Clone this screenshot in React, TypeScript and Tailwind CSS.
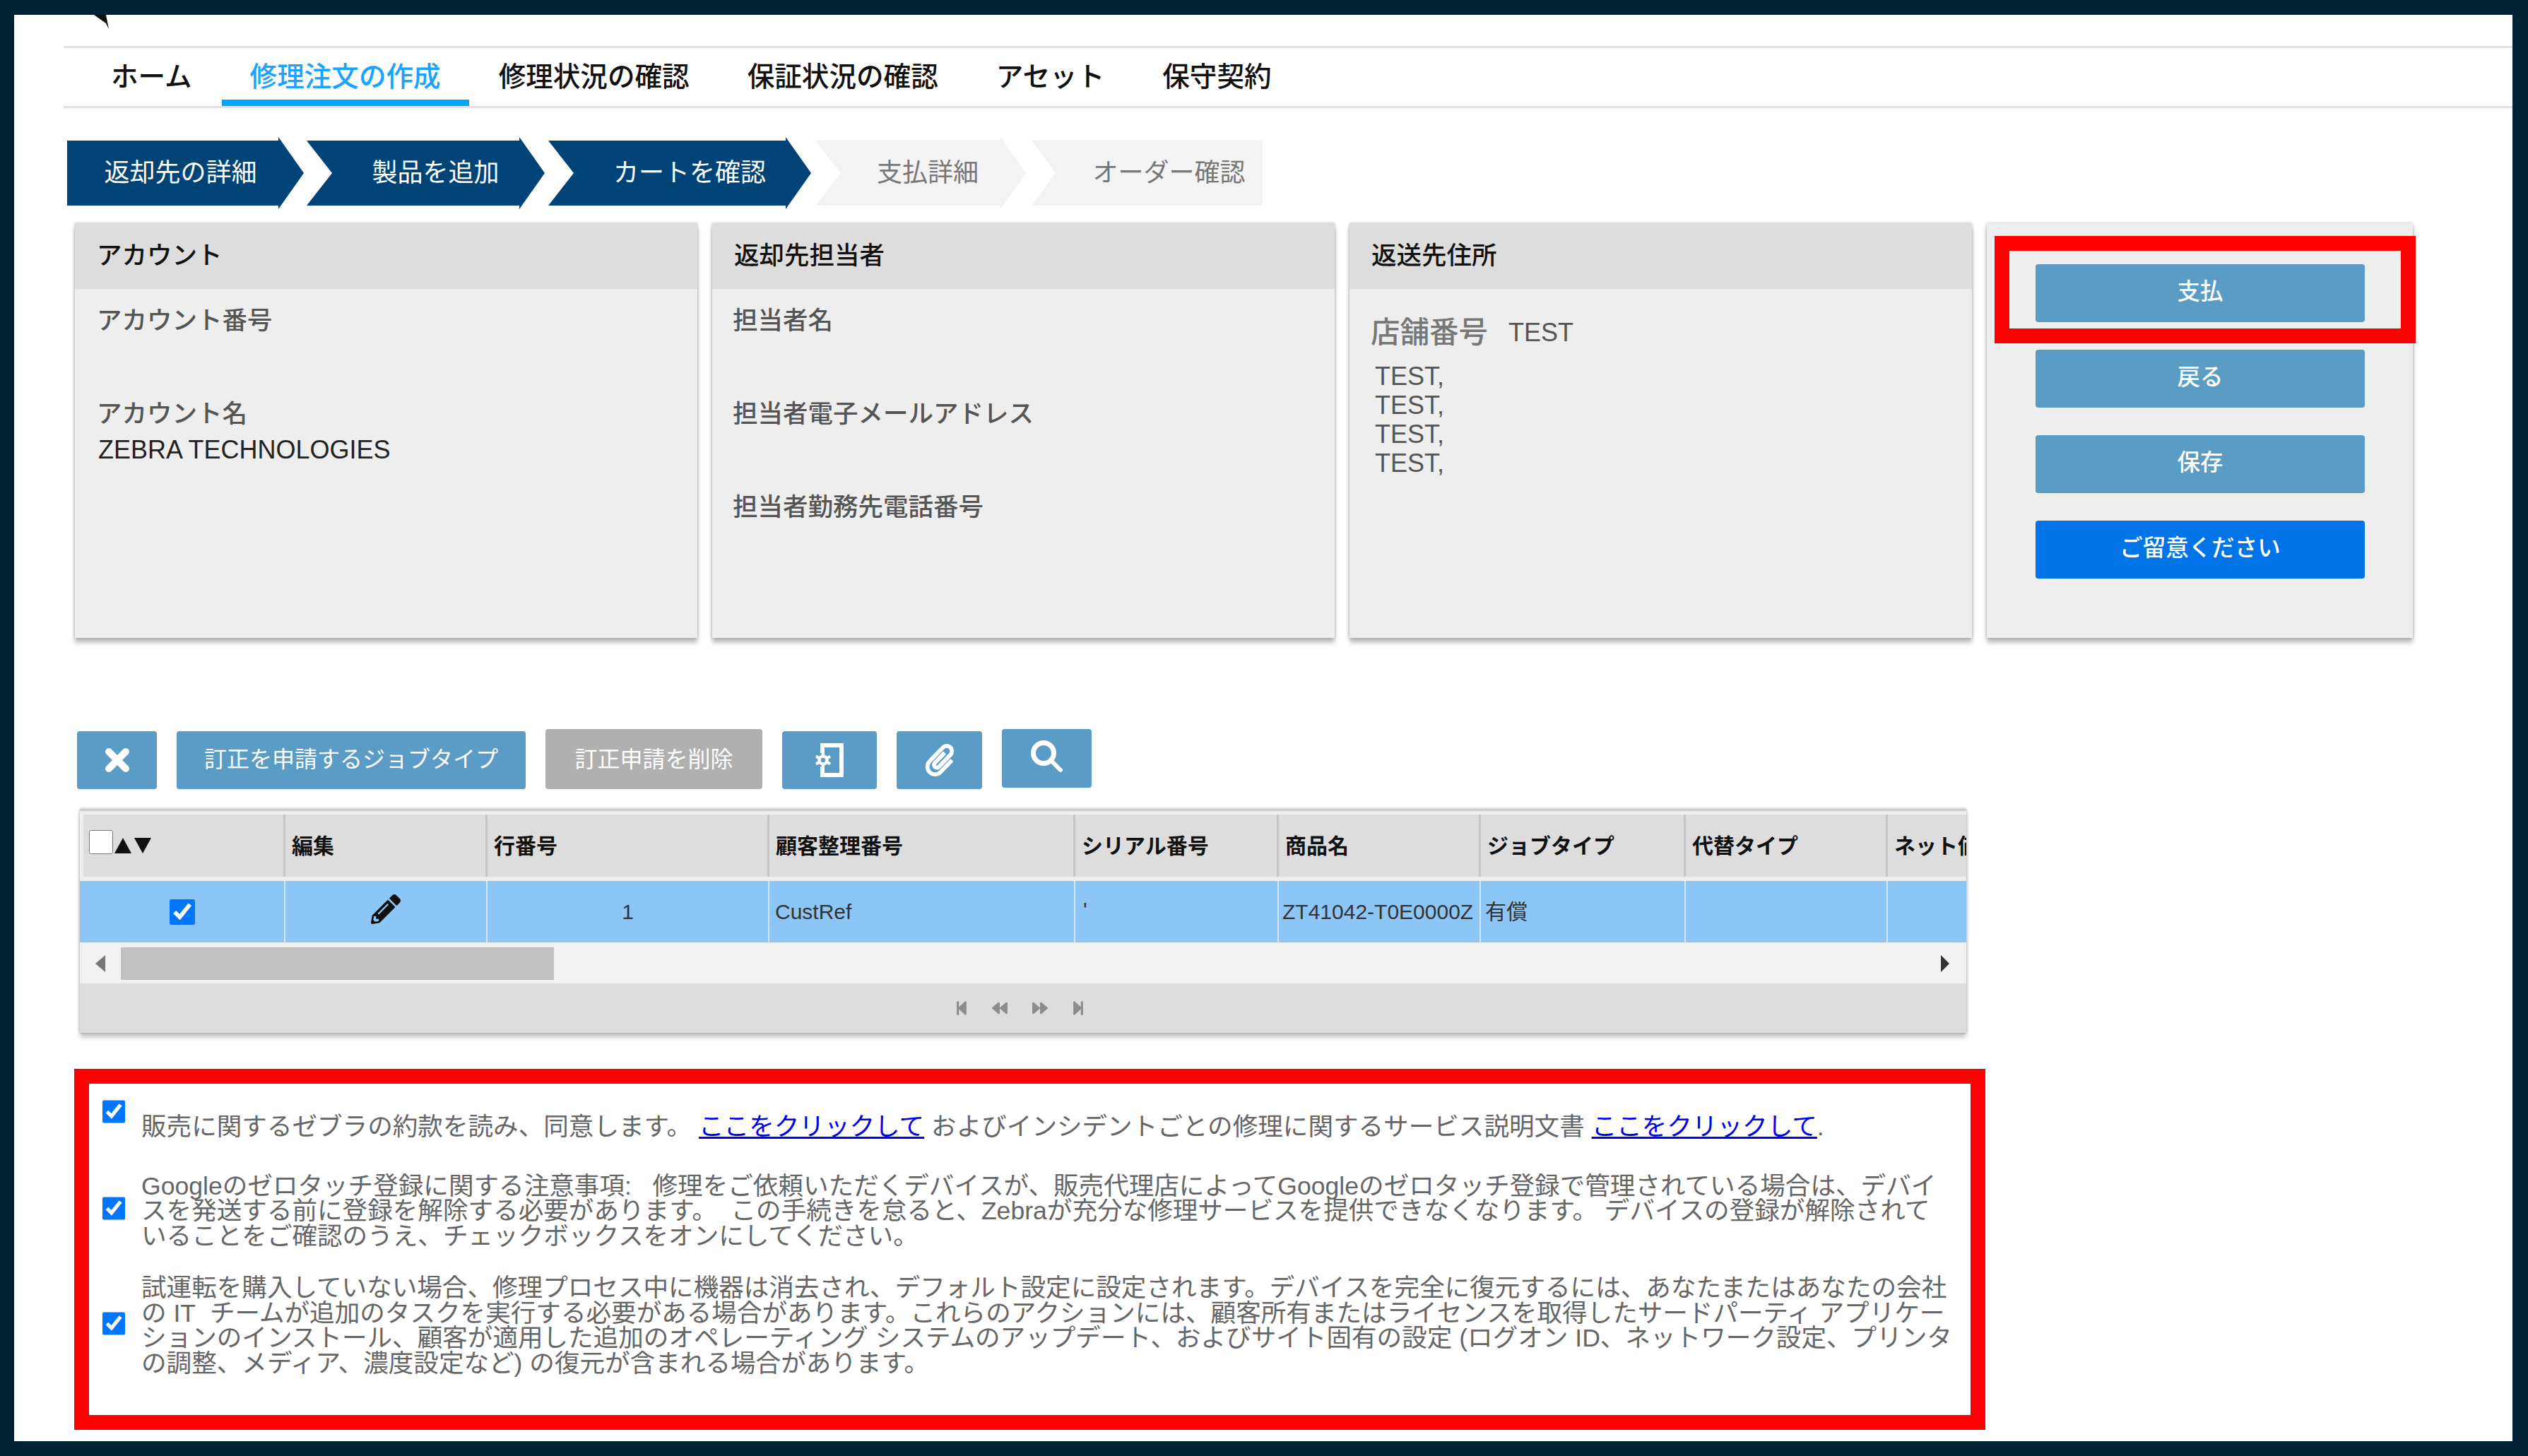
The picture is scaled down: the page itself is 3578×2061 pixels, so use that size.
import { FaPaperclip, FaPencilAlt, FaStepBackward, FaBackward, FaForward, FaStepForward } from "react-icons/fa";

const font = "font-['Liberation_Sans','Noto_Sans_CJK_JP',sans-serif]";

const tabs = ["ホーム", "修理注文の作成", "修理状況の確認", "保証状況の確認", "アセット", "保守契約"];

const columns = ["編集", "行番号", "顧客整理番号", "シリアル番号", "商品名", "ジョブタイプ", "代替タイプ", "ネット価格"];

function Panel({ title, children }: { title: string; children: React.ReactNode }) {
  return (
    <div className="w-[881px] h-[587px] bg-[#eeeeee] shadow-[0_7px_6px_rgba(0,0,0,0.25),0_0_4px_rgba(0,0,0,0.25)]">
      <div className="h-[93px] bg-[#dddddd] flex items-center px-[31px] text-[35.5px] font-medium text-[#111]">{title}</div>
      {children}
    </div>
  );
}

function Field({ label, value }: { label: string; value?: string }) {
  return (
    <div className="h-[132px]">
      <div className="leading-[46px] text-[35.5px] font-medium text-[#555]">{label}</div>
      {value && <div className="mt-[5px] ml-[2px] leading-[46px] text-[36px] text-[#222]">{value}</div>}
    </div>
  );
}

function SideButton({ label, primary }: { label: string; primary?: boolean }) {
  return (
    <button className={`w-[466px] h-[82px] pb-[3px] rounded-[4px] text-white text-[32.5px] font-medium ${primary ? "bg-[#0073e6]" : "bg-[#5a9cc6]"}`}>
      {label}
    </button>
  );
}

function Step({ label, done, last, first, className }: { label: string; done?: boolean; last?: boolean; first?: boolean; className: string }) {
  const shape = first
    ? "[clip-path:polygon(0_5px,calc(100%-36px)_5px,calc(100%-36px)_0,100%_50%,calc(100%-36px)_100%,calc(100%-36px)_calc(100%-5px),0_calc(100%-5px))]"
    : last
    ? "[clip-path:polygon(0_5px,100%_5px,100%_calc(100%-5px),0_calc(100%-5px),34px_50%)]"
    : "[clip-path:polygon(0_5px,calc(100%-36px)_5px,calc(100%-36px)_0,100%_50%,calc(100%-36px)_100%,calc(100%-36px)_calc(100%-5px),0_calc(100%-5px),36px_50%)]";
  return (
    <div className={`h-[102px] flex items-center justify-center text-[36px] ${shape} ${done ? "bg-[#004376] text-white" : "bg-[#f3f3f3] text-[#777]"} ${className}`}>
      {label}
    </div>
  );
}

function ToolButton({ className, children }: { className: string; children: React.ReactNode }) {
  return (
    <button className={`rounded-[4px] bg-[#5a9cc6] text-white flex items-center justify-center ${className}`}>{children}</button>
  );
}

function CloseIcon() {
  return (
    <svg viewBox="0 0 36 36" className="w-[36px] h-[36px]" fill="none" stroke="white" strokeWidth="10" strokeLinecap="round">
      <path d="M6 6L30 30M30 6L6 30" />
    </svg>
  );
}

function GearDoorIcon() {
  return (
    <svg viewBox="0 0 42 48" className="w-[42px] h-[48px]" fill="none" stroke="white">
      <path d="M11 14V3H38V45H11V33" strokeWidth="6" />
      <circle cx="12" cy="24" r="5.5" strokeWidth="4.5" />
      <path d="M12 14V18M12 30V34M2 18.5L6 21M2 29.5L6 27M22 18.5L18 21M22 29.5L18 27" strokeWidth="4" />
    </svg>
  );
}

function SearchIcon() {
  return (
    <svg viewBox="0 0 46 46" className="w-[46px] h-[46px] mb-[6px]" fill="none" stroke="white">
      <circle cx="18" cy="18" r="14.5" strokeWidth="7" />
      <path d="M29 29L42 42" strokeWidth="6" strokeLinecap="round" />
    </svg>
  );
}

export default function App() {
  return (
    <div className={`w-[3578px] h-[2061px] bg-white border-solid border-[#022233] border-t-[21px] border-l-[20px] border-r-[22px] border-b-[21px] overflow-hidden ${font}`}>
      {/* nav */}
      <div className="h-[44px] pl-[113px]">
        <svg viewBox="0 0 22 20" className="w-[22px] h-[20px]">
          <polygon points="0,0 17,0 21,20 17,12" fill="#111" />
        </svg>
      </div>
      <div className="ml-[70px] border-y-[3px] border-[#e0e0e0] h-[88px] flex gap-[2px] pl-[27px]">
        {tabs.map((tab, i) => (
          <div
            key={tab}
            className={`h-[82px] px-[40px] pt-[8px] flex items-center text-[38.6px] font-medium border-b-[9px] ${i === 1 ? "border-[#00a6ff] text-[#1aa3ff]" : "border-transparent text-[#111]"}`}
          >
            {tab}
          </div>
        ))}
      </div>

      {/* wizard steps */}
      <div className="mt-[41px] ml-[75px] flex">
        <Step first done label="返却先の詳細" className="w-[335px] pr-[14px]" />
        <Step done label="製品を追加" className="ml-[4px] w-[337px] pl-[28px]" />
        <Step done label="カートを確認" className="ml-[5px] w-[372px] pl-[28px]" />
        <Step label="支払詳細" className="ml-[6px] w-[298px] pl-[20px]" />
        <Step last label="オーダー確認" className="ml-[8px] w-[327px] pl-[62px]" />
      </div>

      {/* info panels */}
      <div className="mt-[20px] ml-[86px] flex gap-[21px]">
        <Panel title="アカウント">
          <div className="pt-[22px] px-[31px]">
            <Field label="アカウント番号" />
            <Field label="アカウント名" value="ZEBRA TECHNOLOGIES" />
          </div>
        </Panel>
        <Panel title="返却先担当者">
          <div className="pt-[22px] px-[29px]">
            <Field label="担当者名" />
            <Field label="担当者電子メールアドレス" />
            <Field label="担当者勤務先電話番号" />
          </div>
        </Panel>
        <Panel title="返送先住所">
          <div className="pt-[37px] px-[30px]">
            <div className="flex items-center h-[50px] text-[#777]">
              <span className="text-[41.5px] font-medium">店舗番号</span>
              <span className="ml-[29px] text-[36px] text-[#555]">TEST</span>
            </div>
            <div className="mt-[16px] ml-[6px] text-[36px] leading-[41px] text-[#555]">
              <div>TEST,</div>
              <div>TEST,</div>
              <div>TEST,</div>
              <div>TEST,</div>
            </div>
          </div>
        </Panel>
        <div className="relative w-[603px] h-[587px] bg-[#eeeeee] shadow-[0_7px_6px_rgba(0,0,0,0.25),0_0_4px_rgba(0,0,0,0.25)] pt-[58px] pl-[69px] flex flex-col gap-[39px]">
          <SideButton label="支払" />
          <SideButton label="戻る" />
          <SideButton label="保存" />
          <SideButton primary label="ご留意ください" />
          <div className="absolute left-[11px] top-[18px] w-[596px] h-[152px] border-[21px] border-[#ff0000]" />
        </div>
      </div>

      {/* toolbar */}
      <div className="mt-[129px] ml-[89px] flex items-start gap-[28px] h-[85px]">
        <ToolButton className="mt-[3px] w-[113px] h-[82px]"><CloseIcon /></ToolButton>
        <ToolButton className="mt-[3px] w-[494px] h-[82px] text-[32px] pb-[2px]">訂正を申請するジョブタイプ</ToolButton>
        <button className="w-[307px] h-[85px] rounded-[4px] bg-[#b0b0b0] text-white text-[32px]">訂正申請を削除</button>
        <ToolButton className="mt-[3px] w-[134px] h-[82px]"><GearDoorIcon /></ToolButton>
        <ToolButton className="mt-[3px] w-[121px] h-[82px]"><FaPaperclip className="text-[46px]" /></ToolButton>
        <ToolButton className="w-[127px] h-[83px]"><SearchIcon /></ToolButton>
      </div>

      {/* grid */}
      <div className="mt-[28px] ml-[93px] w-[2670px] h-[317px] overflow-hidden bg-[#eeeeee] border-t-[3px] border-[#cccccc] pt-[5px] shadow-[0_7px_6px_rgba(0,0,0,0.2),0_0_4px_rgba(0,0,0,0.3)]">
        <div className="grid grid-cols-[291px_286px_399px_433px_288px_286px_290px_286px_286px] h-[88px] text-[30px] font-bold text-[#111]">
          <div className="ml-[5px] bg-[#dddddd] border-r-[3px] border-[#c6c6c6] flex items-center pl-[8px]">
            <input type="checkbox" className="w-[34px] h-[34px] mb-[10px]" />
            <span className="ml-[2px] w-0 h-0 border-x-[12px] border-x-transparent border-b-[22px] border-b-[#111]" />
            <span className="ml-[4px] w-0 h-0 border-x-[12px] border-x-transparent border-t-[22px] border-t-[#111]" />
          </div>
          {columns.map((col) => (
            <div key={col} className="bg-[#dddddd] border-r-[3px] border-[#c6c6c6] flex items-center pl-[9px] whitespace-nowrap overflow-hidden">
              {col}
            </div>
          ))}
        </div>
        <div className="mt-[6px] grid grid-cols-[291px_286px_399px_433px_288px_286px_290px_286px_286px] h-[87px] bg-[#8cc6f7] text-[30px] text-[#333]">
          <div className="border-r-[2px] border-[#cfe6fb] flex items-center justify-center">
            <input type="checkbox" defaultChecked className="w-[36px] h-[36px]" />
          </div>
          <div className="border-r-[2px] border-[#cfe6fb] flex items-center justify-center">
            <FaPencilAlt className="text-[42px] text-[#111] mb-[8px]" />
          </div>
          <div className="border-r-[2px] border-[#cfe6fb] flex items-center justify-center">1</div>
          <div className="border-r-[2px] border-[#cfe6fb] flex items-center pl-[8px]">CustRef</div>
          <div className="border-r-[2px] border-[#cfe6fb] flex items-start pt-[18px] pl-[11px]">'</div>
          <div className="border-r-[2px] border-[#cfe6fb] flex items-center pl-[5px] whitespace-nowrap">ZT41042-T0E0000Z</div>
          <div className="border-r-[2px] border-[#cfe6fb] flex items-center pl-[6px]">有償</div>
          <div className="border-r-[2px] border-[#cfe6fb]" />
          <div />
        </div>
        <div className="mt-[1px] h-[57px] bg-[#f1f1f1] flex items-center pl-[22px] pr-[24px]">
          <div className="w-0 h-0 border-y-[12px] border-y-transparent border-r-[14px] border-r-[#777]" />
          <div className="ml-[22px] w-[613px] h-[46px] bg-[#c0c0c0]" />
          <div className="ml-auto w-0 h-0 border-y-[12px] border-y-transparent border-l-[12px] border-l-[#333]" />
        </div>
        <div className="h-[70px] bg-[#dddddd] flex items-center pl-[1237px] gap-[32px] text-[22px] text-[#8c8c8c]">
          <FaStepBackward />
          <FaBackward />
          <FaForward className="ml-[3px]" />
          <FaStepForward />
        </div>
      </div>

      {/* agreements */}
      <div className="mt-[51px] ml-[85px] w-[2705px] h-[511px] border-[21px] border-[#ff0000] text-[35.6px] leading-[35.5px] text-[#666] whitespace-nowrap">
        <div className="pt-[23px] pl-[19px] flex items-start gap-[23px]">
          <input type="checkbox" defaultChecked className="w-[32px] h-[33px] shrink-0" />
          <p className="mt-[21px]">
            販売に関するゼブラの約款を読み、同意します。 <a className="text-[#0000ee] underline">ここをクリックして</a> およびインシデントごとの修理に関するサービス説明文書 <a className="text-[#0000ee] underline">ここをクリックして</a>.
          </p>
        </div>
        <div className="mt-[48px] pl-[19px] flex items-center gap-[23px]">
          <input type="checkbox" defaultChecked className="w-[32px] h-[33px] shrink-0 mb-[8px]" />
          <p>
            Googleのゼロタッチ登録に関する注意事項:{"\u00a0\u00a0\u00a0"}修理をご依頼いただくデバイスが、販売代理店によってGoogleのゼロタッチ登録で管理されている場合は、デバイ<br />
            スを発送する前に登録を解除する必要があります。{"\u00a0\u00a0"}この手続きを怠ると、Zebraが充分な修理サービスを提供できなくなります。 デバイスの登録が解除されて<br />
            いることをご確認のうえ、チェックボックスをオンにしてください。
          </p>
        </div>
        <div className="mt-[38px] pl-[19px] flex items-center gap-[23px]">
          <input type="checkbox" defaultChecked className="w-[32px] h-[33px] shrink-0 mb-[8px]" />
          <p>
            試運転を購入していない場合、修理プロセス中に機器は消去され、デフォルト設定に設定されます。デバイスを完全に復元するには、あなたまたはあなたの会社<br />
            の IT{"\u00a0\u00a0"}チームが追加のタスクを実行する必要がある場合があります。これらのアクションには、顧客所有またはライセンスを取得したサードパーティ アプリケー<br />
            ションのインストール、顧客が適用した追加のオペレーティング システムのアップデート、およびサイト固有の設定 (ログオン ID、ネットワーク設定、プリンタ<br />
            の調整、メディア、濃度設定など) の復元が含まれる場合があります。
          </p>
        </div>
      </div>
    </div>
  );
}
